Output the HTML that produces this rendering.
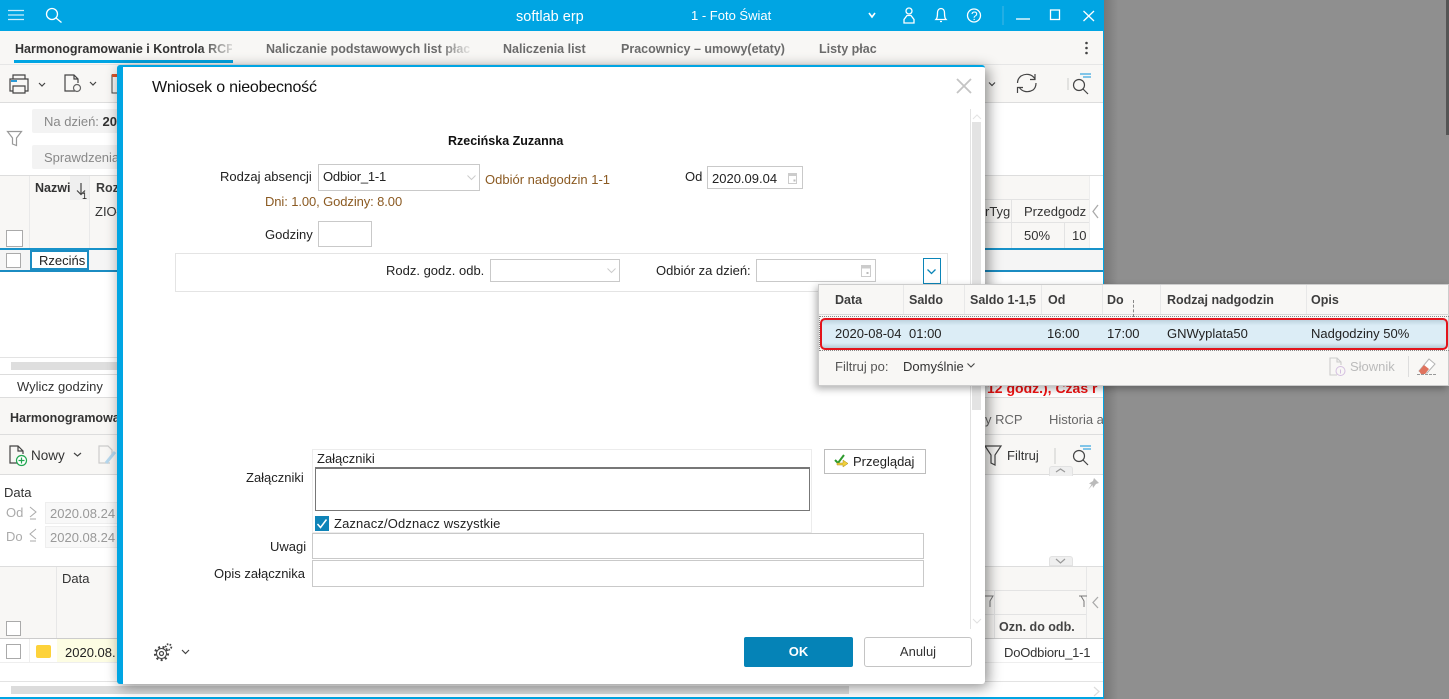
<!DOCTYPE html>
<html lang="pl"><head><meta charset="utf-8"><title>Wniosek o nieobecność</title>
<style>
html,body{margin:0;padding:0;width:1449px;height:699px;overflow:hidden;background:#8f8f8f}
body{position:relative;font-family:"Liberation Sans",sans-serif;font-size:13px;color:#222}
.a,.t,.b{position:absolute}
.t{white-space:nowrap;line-height:16px}
.b{box-sizing:border-box;border:1px solid #c9c9c9;background:#fff}
.g{color:#aaa}.br{color:#8b5a22}
svg{position:absolute;overflow:visible}
.s{fill:none;stroke:#444;stroke-width:1.2}
.w{fill:none;stroke:#fff;stroke-width:1.3}
.h{font-weight:bold;font-size:12.500px;color:#3d3d3d}
</style></head><body>
<!-- right shadow / scrollbar -->
<div class="a" style="left:1104px;top:0;width:14px;height:699px;background:linear-gradient(90deg,#777,#8f8f8f)"></div>
<div class="a" style="left:1446px;top:0;width:3px;height:135px;background:#555"></div>

<!-- app window -->
<div class="a" id="app" style="left:0;top:0;width:1104px;height:699px;background:#fff;border-right:1px solid #00a5e3;box-sizing:border-box;overflow:hidden">
<div class="a" style="left:0;top:0;width:1103px;height:31px;background:#00a5e3"></div>
<svg style="left:0;top:0" width="1103" height="31">
<path class="w" d="M8 10.500H24M8 15H24M8 19.500H24" stroke-opacity=".8"/>
<circle class="w" cx="52" cy="14" r="5.500"/><path class="w" d="M56 18L61.500 22.500"/>
<path d="M869 13L872 17L875 13" fill="none" stroke="#fff" stroke-width="1.600"/>
<circle class="w" cx="909" cy="11" r="3"/><path class="w" d="M904 23V19.500L907 15.500H911L914 19.500V23Z"/>
<path class="w" d="M936 19.500C937.500 18 937.500 15 937.500 13C937.500 10 939 8.500 941 8.500C943 8.500 944.500 10 944.500 13C944.500 15 944.500 18 946 19.500ZM940 21.500H942"/>
<circle class="w" cx="974" cy="15.500" r="6.500"/>
<path class="w" d="M1016 19H1030"/>
<rect class="w" x="1050.500" y="10" width="9" height="9.500"/>
<path class="w" d="M1083.500 11L1094 21M1094 11L1083.500 21"/>
</svg>
<div class="a" style="left:1002px;top:6px;width:2px;height:19px;background:#22aee4"></div>
<div class="t" style="left:516px;top:9px;color:#fff;font-size:14.500px">softlab erp</div>
<div class="t" style="left:691px;top:8px;color:#fff;font-size:13px">1 - Foto Świat</div>
<div class="t" style="left:971px;top:8px;color:#fff;font-size:12px">?</div>

<!-- tabs -->
<div class="a" style="left:0;top:31px;width:1103px;height:34px;background:#f8f7f5;border-bottom:1px solid #e6e6e6;box-sizing:border-box"></div>
<div class="t" style="left:15px;top:41px;font-weight:bold;font-size:12.500px;color:#333;width:217px;overflow:hidden;-webkit-mask-image:linear-gradient(90deg,#000 85%,rgba(0,0,0,.15));mask-image:linear-gradient(90deg,#000 85%,rgba(0,0,0,.15))">Harmonogramowanie i Kontrola RCP</div>
<div class="a" style="left:14px;top:60px;width:219px;height:3px;background:#00a5e3"></div>
<div class="t" style="left:266px;top:41px;font-weight:bold;font-size:12.500px;color:#6b6b6b;width:205px;overflow:hidden;-webkit-mask-image:linear-gradient(90deg,#000 85%,rgba(0,0,0,.1));mask-image:linear-gradient(90deg,#000 85%,rgba(0,0,0,.1))">Naliczanie podstawowych list płac</div>
<div class="t" style="left:503px;top:41px;font-weight:bold;font-size:12.500px;color:#6b6b6b">Naliczenia list</div>
<div class="t" style="left:621px;top:41px;font-weight:bold;font-size:12.500px;color:#6b6b6b">Pracownicy – umowy(etaty)</div>
<div class="t" style="left:819px;top:41px;font-weight:bold;font-size:12.500px;color:#6b6b6b">Listy płac</div>
<svg style="left:1080px;top:40px" width="12" height="16"><circle cx="6.500" cy="3" r="1.300" fill="#444"/><circle cx="6.500" cy="8" r="1.300" fill="#444"/><circle cx="6.500" cy="13" r="1.300" fill="#444"/></svg>

<!-- toolbar -->
<div class="a" style="left:0;top:65px;width:1103px;height:38px;background:#f8f7f5;border-bottom:1px solid #ddd;box-sizing:border-box"></div>
<svg style="left:0;top:65px" width="1103" height="38">
<path class="s" d="M13 14V10H25V14M13 26H10V14H28V26H25M13 21H25V28H13Z"/><path d="M11 16H17" stroke="#2a9ad6" stroke-width="2"/>
<path class="s" d="M39 18L42 21L45 18M90 17L93 20L96 17"/>
<path class="s" d="M75 26H65V10H74L78 14V18M74 10V14H78"/>
<circle cx="77" cy="23" r="3.500" fill="none" stroke="#666" stroke-width="1.200"/>
<path d="M112 10H118V28H112Z" fill="none" stroke="#444"/><path d="M112 9H117V12H112Z" fill="#d9542b"/>
<path class="s" d="M1035 14C1032 9 1026 8 1021 11C1018.500 13 1017.500 15 1017.500 18M1035 9V14.500H1030M1019 22C1022 27 1028 28 1033 25C1035.500 23 1036 21 1036 18M1017.500 28V22.500H1023"/>
<path d="M1068 13V25" stroke="#ccc" stroke-width="1"/>
<circle class="s" cx="1079" cy="20" r="5.500"/><path class="s" d="M1083 24L1088 29"/>
<path d="M1080 9H1091M1083 12H1091" stroke="#3ba7e0" stroke-width="1.300" fill="none"/>
</svg>
<svg style="left:985px;top:78px" width="16" height="14"><path class="s" d="M4 4.500L7 7.500L10 4.500"/></svg>

<!-- filters -->
<div class="a" style="left:32px;top:109px;width:90px;height:24px;background:#f3f3f3;border-radius:2px"></div>
<div class="t g" style="left:44px;top:114px;color:#888">Na dzień: <b style="color:#333">2020</b></div>
<div class="a" style="left:32px;top:145px;width:90px;height:24px;background:#f3f3f3;border-radius:2px"></div>
<div class="t" style="left:44px;top:150px;color:#888">Sprawdzenia</div>
<svg style="left:6px;top:130px" width="18" height="18"><path d="M1.500 1.500H15.500L10.500 8V15.500L6.500 14V8Z" fill="none" stroke="#999" stroke-width="1.200"/></svg>

<!-- upper grid -->
<div class="a" style="left:0;top:175px;width:1103px;height:73px;background:#f8f7f5;border-top:1px solid #ddd;box-sizing:border-box"></div>
<div class="a" style="left:29px;top:176px;width:1px;height:72px;background:#e9e9e9"></div>
<div class="a" style="left:89px;top:176px;width:1px;height:72px;background:#e9e9e9"></div>
<div class="t h" style="left:35px;top:180px;color:#333">Nazwi</div>
<div class="a" style="left:70px;top:176px;width:19px;height:24px;background:#efefef"></div>
<svg style="left:72px;top:180px" width="16" height="20"><path class="s" d="M9 3V14M5 10.500L9 14.500L13 10.500"/></svg>
<div class="t" style="left:82px;top:191px;font-size:9px;line-height:10px">1</div>
<div class="t h" style="left:96px;top:180px">Roz</div>
<div class="t" style="left:95px;top:204px;color:#333">ZIOł</div>
<div class="a" style="left:6px;top:230px;width:15px;height:15px;border:1px solid #aaa;background:#fff"></div>
<div class="a" style="left:0;top:248px;width:1103px;height:2px;background:#1892c9"></div>
<div class="a" style="left:0;top:250px;width:1103px;height:20px;background:#f5f5f5"></div>
<div class="a" style="left:0;top:270px;width:1103px;height:2px;background:#1b8cc2"></div>
<div class="a" style="left:6px;top:253px;width:13px;height:13px;border:1px solid #aaa;background:#fff"></div>
<div class="a" style="left:30px;top:250px;width:59px;height:20px;box-sizing:border-box;border:2px solid #1b8cc2;background:#fff"></div>
<div class="t" style="left:39px;top:253px;width:47px;overflow:hidden;font-size:13px">Rzecińsk</div>
<div class="a" style="left:1011px;top:200px;width:1px;height:48px;background:#e3e3e3"></div>
<div class="a" style="left:977px;top:199px;width:118px;height:1px;background:#e3e3e3"></div>
<div class="a" style="left:977px;top:222px;width:118px;height:1px;background:#e3e3e3"></div>
<div class="a" style="left:1064px;top:223px;width:1px;height:25px;background:#e3e3e3"></div>
<div class="a" style="left:1089px;top:176px;width:14px;height:72px;background:#fff;border-left:1px solid #eee"></div>
<div class="t" style="left:985px;top:204px;color:#333">rTyg</div>
<div class="t" style="left:1024px;top:204px;width:65px;overflow:hidden;color:#333">Przedgodz</div>
<div class="t" style="left:1024px;top:228px;color:#333">50%</div>
<div class="t" style="left:1072px;top:228px;color:#333">10</div>
<svg style="left:1090px;top:203px" width="12" height="18"><path d="M8 2L3 8.500L8 15" fill="none" stroke="#aaa" stroke-width="1.300"/></svg>

<!-- scrollbar / calc row -->
<div class="a" style="left:0;top:357px;width:1103px;height:1px;background:#e3e3e3"></div>
<div class="a" style="left:11px;top:362px;width:1000px;height:8px;background:#dedede"></div>
<div class="a" style="left:0;top:374px;width:1103px;height:1px;background:#ddd"></div>
<div class="t" style="left:17px;top:379px;font-size:13px;color:#333">Wylicz godziny</div>
<div class="a" style="left:0;top:397px;width:1103px;height:1px;background:#ddd"></div>
<div class="t" style="left:987px;top:380px;color:#ee1111;font-weight:bold;font-size:14px">12 godz.), Czas r</div>

<!-- lower tabs -->
<div class="a" style="left:0;top:398px;width:1103px;height:37px;background:#f8f7f5;border-bottom:1px solid #ddd;box-sizing:border-box"></div>
<div class="t" style="left:10px;top:410px;font-weight:bold;font-size:12.500px;color:#333">Harmonogramowa</div>
<div class="t" style="left:985px;top:412px;color:#666">y RCP</div>
<div class="t" style="left:1049px;top:412px;color:#666;width:54px;overflow:hidden">Historia a</div>
<!-- lower toolbar -->
<div class="a" style="left:0;top:435px;width:1103px;height:40px;background:#f8f7f5;border-bottom:1px solid #ddd;box-sizing:border-box"></div>
<svg style="left:0;top:435px" width="1103" height="40">
<path class="s" d="M19 28H10V11H18L23 16V19M18 11V16H23"/>
<circle cx="21.500" cy="25.500" r="5" fill="#fff" stroke="#21a650" stroke-width="1.200"/><path d="M21.500 22.500V28.500M18.500 25.500H24.500" stroke="#21a650" stroke-width="1.200"/>
<path class="s" d="M74 18L77.500 21L81 18"/>
<path d="M110 28H99V11H108L112 15V20" fill="none" stroke="#ccc" stroke-width="1.200"/><path d="M106 28L115 17" stroke="#b6d8ee" stroke-width="3"/>
<path class="s" d="M985 11H1001L995 20V30L991 28V20Z"/>
<path d="M1055 13V29" stroke="#ccc"/>
<circle class="s" cx="1079" cy="21" r="5.500"/><path class="s" d="M1083 25L1088 30"/>
<path d="M1080 11H1091M1083 14H1091" stroke="#3ba7e0" stroke-width="1.300" fill="none"/>
</svg>
<div class="t" style="left:31px;top:448px;font-size:13.500px;color:#333">Nowy</div>
<div class="t" style="left:1007px;top:448px;color:#333">Filtruj</div>
<svg style="left:1085px;top:476px" width="16" height="16"><path d="M9 2L14 7L11 8L8 12L7.500 9L3 14L6.500 8.500L4 7.500L8 5Z" fill="#bbb"/></svg>
<!-- dates -->
<div class="t" style="left:4px;top:485px;font-size:13px;color:#333">Data</div>
<div class="t g" style="left:6px;top:505px;color:#aaa">Od</div>
<div class="t g" style="left:6px;top:529px;color:#aaa">Do</div>
<svg style="left:27px;top:504px" width="12" height="40"><path d="M3 3L9 8L3 13M3 15L9 15" fill="none" stroke="#aaa"/><path d="M9 26L3 31L9 36M3 38L9 38" fill="none" stroke="#aaa" transform="translate(0,-1)"/></svg>
<div class="a" style="left:45px;top:502px;width:75px;height:22px;background:#f8f8f8;border:1px solid #eee;box-sizing:border-box"></div>
<div class="a" style="left:45px;top:526px;width:75px;height:22px;background:#f8f8f8;border:1px solid #eee;box-sizing:border-box"></div>
<div class="t" style="left:50px;top:506px;color:#999">2020.08.24</div>
<div class="t" style="left:50px;top:530px;color:#999">2020.08.24</div>
<div class="a" style="left:1049px;top:466px;width:24px;height:10px;background:#efefef;border-radius:3px 3px 0 0;border:1px solid #e2e2e2;border-bottom:0;box-sizing:border-box"></div>
<svg style="left:1049px;top:466px" width="24" height="9"><path d="M7 6L11.500 3L16 6" fill="none" stroke="#999" stroke-width="1.200"/></svg>
<div class="a" style="left:1049px;top:556px;width:24px;height:10px;background:#efefef;border-radius:3px 3px 0 0;border:1px solid #e2e2e2;box-sizing:border-box"></div>
<svg style="left:1049px;top:557px" width="24" height="9"><path d="M7 2L11.500 6L16 2" fill="none" stroke="#999" stroke-width="1.200"/></svg>

<!-- lower grid -->
<div class="a" style="left:0;top:566px;width:1103px;height:73px;background:#f8f7f5;border-top:1px solid #ddd;border-bottom:1px solid #ccc;box-sizing:border-box"></div>
<div class="a" style="left:56px;top:567px;width:1px;height:71px;background:#e7e7e7"></div>
<div class="t" style="left:62px;top:571px;color:#333;font-size:13px">Data</div>
<div class="a" style="left:6px;top:621px;width:13px;height:13px;border:1px solid #aaa;background:#fff"></div>
<div class="a" style="left:6px;top:644px;width:13px;height:13px;border:1px solid #aaa;background:#fff"></div>
<div class="a" style="left:29px;top:639px;width:1px;height:24px;background:#eee"></div>
<div class="a" style="left:36px;top:645px;width:15px;height:13px;background:#fdd23a;border-radius:2px"></div>
<div class="a" style="left:57px;top:639px;width:65px;height:24px;background:#fdfde3"></div>
<div class="t" style="left:65px;top:645px;color:#222">2020.08.</div>
<div class="a" style="left:0;top:662px;width:1103px;height:1px;background:#eee"></div>
<div class="a" style="left:994px;top:590px;width:1px;height:48px;background:#e3e3e3"></div>
<div class="a" style="left:977px;top:590px;width:110px;height:1px;background:#e3e3e3"></div>
<div class="a" style="left:977px;top:614px;width:110px;height:1px;background:#e3e3e3"></div>
<div class="a" style="left:1086px;top:567px;width:1px;height:71px;background:#e7e7e7"></div>
<svg style="left:983px;top:594px" width="11" height="16"><path d="M0 2H10L7 7V13" fill="none" stroke="#777"/></svg>
<svg style="left:1079px;top:594px" width="8" height="16"><path d="M0 2H8M2 2L5 7V13" fill="none" stroke="#777"/></svg>
<svg style="left:1090px;top:595px" width="12" height="16"><path d="M8 2L3 7.500L8 13" fill="none" stroke="#aaa" stroke-width="1.300"/></svg>
<div class="t" style="left:999px;top:619px;font-weight:bold;font-size:12.500px;color:#444">Ozn. do odb.</div>
<div class="t" style="left:1004px;top:645px;color:#333;letter-spacing:-.2px">DoOdbioru_1-1</div>
<!-- bottom scrollbar -->
<div class="a" style="left:0;top:681px;width:1103px;height:1px;background:#e3e3e3"></div>
<div class="a" style="left:11px;top:686px;width:838px;height:8px;background:#dcdcdc"></div>
<svg style="left:1092px;top:686px" width="10" height="11"><path d="M2 1L7 5.500L2 10" fill="none" stroke="#ddd" stroke-width="1.200"/></svg>
<div class="a" style="left:0;top:697px;width:1103px;height:2px;background:#00a5e3"></div>
</div>

<!-- dialog -->
<div class="a" style="left:117px;top:65px;width:868px;height:619px;background:#fff;border-top:2px solid #00a5e3;border-left:6px solid #00a5e3;box-sizing:border-box;border-radius:3px;box-shadow:3px 3px 14px rgba(0,0,0,.45)"></div>
<div class="t" style="left:152px;top:79px;font-size:16px;line-height:18px;color:#111;letter-spacing:-.2px">Wniosek o nieobecność</div>
<svg style="left:956px;top:78px" width="16" height="16"><path d="M1 1L15 15M15 1L1 15" stroke="#c4c4c4" stroke-width="1.800"/></svg>
<div class="a" style="left:970px;top:109px;width:1px;height:520px;background:#e3e3e3"></div>
<div class="a" style="left:972px;top:122px;width:9px;height:288px;background:#e3e3e3"></div>
<svg style="left:971px;top:113px" width="12" height="8"><path d="M2 6L6 2L10 6" fill="none" stroke="#e3e3e3"/></svg>
<svg style="left:971px;top:617px" width="12" height="8"><path d="M2 2L6 6L10 2" fill="none" stroke="#e0e0e0"/></svg>

<div class="t" style="left:448px;top:133px;font-weight:bold;font-size:12.500px;color:#111">Rzecińska Zuzanna</div>
<div class="t" style="left:220px;top:169px;color:#222">Rodzaj absencji</div>
<div class="b" style="left:318px;top:164px;width:162px;height:27px"></div>
<div class="t" style="left:323px;top:169px;color:#222;letter-spacing:-.2px">Odbior_1-1</div>
<svg style="left:466px;top:174px" width="12" height="8"><path d="M1.500 1.500L5.500 5.500L9.500 1.500" fill="none" stroke="#ccc"/></svg>
<div class="t br" style="left:485px;top:172px">Odbiór nadgodzin 1-1</div>
<div class="t br" style="left:265px;top:194px;letter-spacing:-.1px">Dni: 1.00, Godziny: 8.00</div>
<div class="t" style="left:685px;top:169px;color:#222">Od</div>
<div class="b" style="left:707px;top:166px;width:96px;height:23px"></div>
<div class="t" style="left:712px;top:171px;color:#222">2020.09.04</div>
<svg style="left:786px;top:171px" width="14" height="14"><path d="M2.500 2.500H10.500V12.500H2.500Z" fill="#fff" stroke="#ccc"/><path d="M2.500 2.500H10.500V5H2.500Z" fill="#ccc"/><rect x="7.500" y="8.500" width="2" height="2" fill="#bbb"/></svg>
<div class="t" style="left:265px;top:227px;color:#222">Godziny</div>
<div class="b" style="left:318px;top:221px;width:54px;height:26px"></div>
<div class="b" style="left:175px;top:253px;width:773px;height:39px;border-color:#e4e4e4"></div>
<div class="t" style="left:386px;top:263px;color:#222">Rodz. godz. odb.</div>
<div class="b" style="left:490px;top:259px;width:130px;height:23px"></div>
<svg style="left:606px;top:267px" width="12" height="8"><path d="M1.500 1.500L5.500 5.500L9.500 1.500" fill="none" stroke="#ccc"/></svg>
<div class="t" style="left:656px;top:263px;color:#222">Odbiór za dzień:</div>
<div class="b" style="left:756px;top:259px;width:120px;height:23px"></div>
<svg style="left:859px;top:263px" width="14" height="15"><path d="M2.500 2.500H11.500V13.500H2.500Z" fill="#fff" stroke="#ccc"/><path d="M2.500 2.500H11.500V5.500H2.500Z" fill="#ccc"/><rect x="7.500" y="9" width="2" height="2" fill="#bbb"/></svg>
<div class="b" style="left:923px;top:258px;width:18px;height:26px;border-color:#0b85b8"></div>
<svg style="left:926px;top:268px" width="12" height="8"><path d="M1.500 1.500L5.500 5.500L9.500 1.500" fill="none" stroke="#0b85b8" stroke-width="1.300"/></svg>

<div class="t" style="left:246px;top:470px;color:#222">Załączniki</div>
<div class="b" style="left:312px;top:449px;width:500px;height:84px;border-color:#ececec"></div>
<div class="t" style="left:317px;top:451px;color:#222">Załączniki</div>
<div class="b" style="left:315px;top:467px;width:495px;height:44px;border:1px solid #777;border-top-width:2px"></div>
<div class="a" style="left:315px;top:516px;width:14px;height:15px;background:#0f84b8"></div>
<svg style="left:315px;top:516px" width="14" height="15"><path d="M2.500 8L5.500 11.500L11.500 3.500" fill="none" stroke="#fff" stroke-width="1.500"/></svg>
<div class="t" style="left:334px;top:516px;color:#222;letter-spacing:.13px">Zaznacz/Odznacz wszystkie</div>
<div class="b" style="left:824px;top:449px;width:102px;height:25px;border-color:#bdbdbd"></div>
<svg style="left:834px;top:454px" width="15" height="14"><path d="M1 6L4 9L10 1" fill="none" stroke="#2d9a2d" stroke-width="2"/><path d="M3 9H9V6L14 9.500L9 13V11H3Z" fill="#f0cf3a" stroke="#a98f1e" stroke-width=".5"/></svg>
<div class="t" style="left:853px;top:454px;color:#222">Przeglądaj</div>
<div class="t" style="left:270px;top:539px;color:#222">Uwagi</div>
<div class="b" style="left:312px;top:533px;width:612px;height:26px"></div>
<div class="t" style="left:214px;top:566px;color:#222">Opis załącznika</div>
<div class="b" style="left:312px;top:560px;width:612px;height:27px"></div>
<svg style="left:152px;top:642px" width="40" height="22">
<circle cx="9.500" cy="11.500" r="6.500" fill="none" stroke="#444" stroke-width="2.200" stroke-dasharray="2 2.500"/><circle cx="9.500" cy="11.500" r="5" fill="#fff" stroke="#444"/><circle class="s" cx="9.500" cy="11.500" r="2"/>
<circle cx="16.500" cy="5" r="2.800" fill="#fff" stroke="#444" stroke-width="1.800" stroke-dasharray="1.500 1.300"/>
<path class="s" d="M30 8L33.500 11.500L37 8"/></svg>
<div class="a" style="left:744px;top:637px;width:109px;height:30px;background:#0583b7;border-radius:2px"></div>
<div class="t" style="left:744px;top:644px;width:109px;text-align:center;color:#fff;font-weight:bold;font-size:13px">OK</div>
<div class="b" style="left:864px;top:637px;width:108px;height:30px;border-radius:3px;border-color:#c4c4c4"></div>
<div class="t" style="left:864px;top:644px;width:108px;text-align:center;color:#333">Anuluj</div>

<!-- dropdown popup -->
<div class="a" style="left:818px;top:284px;width:631px;height:102px;background:#f8f7f5;border:1px solid #ccc;box-sizing:border-box;box-shadow:-2px 3px 7px rgba(0,0,0,.3);overflow:hidden"></div>
<div class="a" style="left:819px;top:314px;width:630px;height:1px;background:#d8d8d8"></div>
<div class="a" style="left:819px;top:316px;width:630px;height:35px;box-sizing:border-box;border:1px dotted #888;border-right:0"></div>
<div class="a" style="left:903px;top:285px;width:1px;height:29px;background:#e8e8e8"></div>
<div class="a" style="left:964px;top:285px;width:1px;height:29px;background:#e8e8e8"></div>
<div class="a" style="left:1041px;top:285px;width:1px;height:29px;background:#e8e8e8"></div>
<div class="a" style="left:1102px;top:285px;width:1px;height:29px;background:#e8e8e8"></div>
<div class="a" style="left:1160px;top:285px;width:1px;height:29px;background:#e8e8e8"></div>
<div class="a" style="left:1306px;top:285px;width:1px;height:29px;background:#e8e8e8"></div>
<div class="a" style="left:1133px;top:300px;height:17px;border-left:1px dashed #888"></div>
<div class="t h" style="left:835px;top:292px">Data</div>
<div class="t h" style="left:909px;top:292px">Saldo</div>
<div class="t h" style="left:970px;top:292px">Saldo 1-1,5</div>
<div class="t h" style="left:1048px;top:292px">Od</div>
<div class="t h" style="left:1107px;top:292px">Do</div>
<div class="t h" style="left:1167px;top:292px">Rodzaj nadgodzin</div>
<div class="t h" style="left:1311px;top:292px">Opis</div>
<div class="a" style="left:820px;top:318px;width:628px;height:32px;box-sizing:border-box;border:2px solid #e3141c;border-radius:5px;background:linear-gradient(180deg,#bdd3df 0,#dcedf6 20%,#dcedf6 82%,#b7cad4 100%)"></div>
<div class="t" style="left:835px;top:326px;color:#222">2020-08-04</div>
<div class="t" style="left:909px;top:326px;color:#222">01:00</div>
<div class="t" style="left:1047px;top:326px;color:#222">16:00</div>
<div class="t" style="left:1107px;top:326px;color:#222">17:00</div>
<div class="t" style="left:1167px;top:326px;color:#222">GNWyplata50</div>
<div class="t" style="left:1311px;top:326px;color:#222">Nadgodziny 50%</div>
<div class="t" style="left:835px;top:359px;color:#555">Filtruj po:</div>
<div class="t" style="left:903px;top:359px;color:#333">Domyślnie</div>
<svg style="left:966px;top:362px" width="12" height="8"><path d="M1.500 1.500L5 5L8.500 1.500" fill="none" stroke="#444" stroke-width="1.100"/></svg>
<svg style="left:1328px;top:356px" width="20" height="22"><path d="M9 19H2V2H9L13 6V9M9 2V6H13" fill="none" stroke="#ccc" stroke-width="1.100"/><circle cx="12.500" cy="15" r="4.500" fill="none" stroke="#d4bfe0"/><path d="M12.500 13.500V17.500" stroke="#d4bfe0"/></svg>
<div class="t" style="left:1350px;top:359px;color:#bbb">Słownik</div>
<div class="a" style="left:1408px;top:356px;width:1px;height:21px;background:#ddd"></div>
<svg style="left:1416px;top:356px" width="22" height="21"><path d="M3 15L13 3L19 8L11 17H6Z" fill="#fff" stroke="#b5b5b5"/><path d="M3 15L8 9L13 13L9 18H5Z" fill="#e0735e"/><path d="M1 18.500H20" stroke="#999" stroke-dasharray="3 1"/></svg>
</body></html>
